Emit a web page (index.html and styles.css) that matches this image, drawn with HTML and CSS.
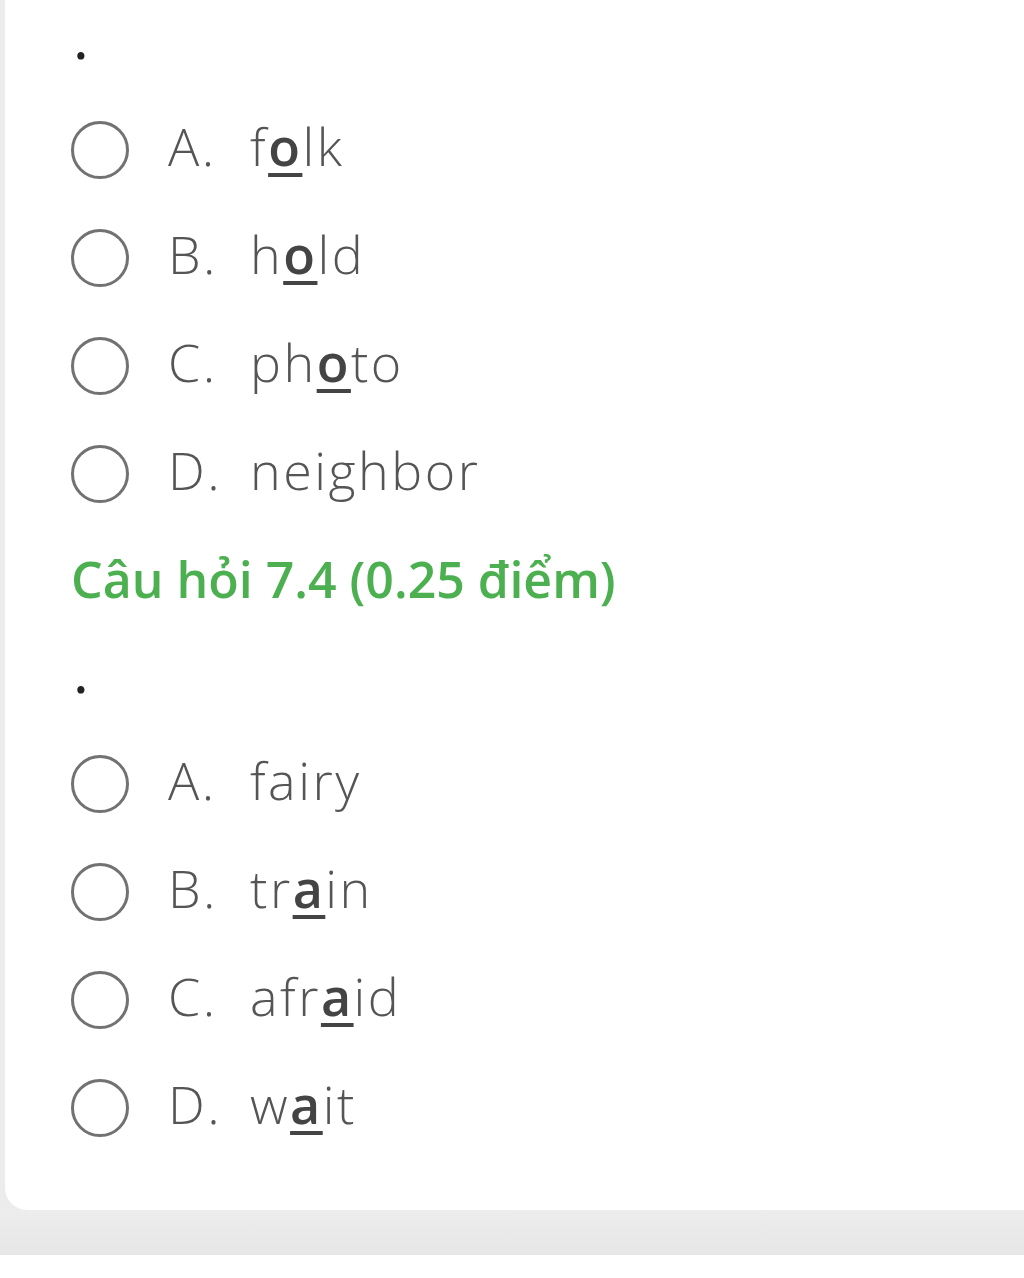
FILE: index.html
```html
<!DOCTYPE html>
<html lang="vi">
<head>
<meta charset="utf-8">
<title>Câu hỏi</title>
<link rel="stylesheet" href="styles.css">
</head>
<body>
<div class="page">
  <div class="card">
    <div class="dot">.</div>
    <div class="options">
      <div class="option"><span class="radio"></span><span class="label">A.</span><span class="word">f<b>o</b>lk</span></div>
      <div class="option"><span class="radio"></span><span class="label">B.</span><span class="word">h<b>o</b>ld</span></div>
      <div class="option"><span class="radio"></span><span class="label">C.</span><span class="word">ph<b>o</b>to</span></div>
      <div class="option"><span class="radio"></span><span class="label">D.</span><span class="word">neighbor</span></div>
    </div>
    <h2 class="question">Câu hỏi 7.4 (0.25 điểm)</h2>
    <div class="dot dot-second">.</div>
    <div class="options">
      <div class="option"><span class="radio"></span><span class="label">A.</span><span class="word">fairy</span></div>
      <div class="option"><span class="radio"></span><span class="label">B.</span><span class="word">tr<b>a</b>in</span></div>
      <div class="option"><span class="radio"></span><span class="label">C.</span><span class="word">afr<b>a</b>id</span></div>
      <div class="option"><span class="radio"></span><span class="label">D.</span><span class="word">w<b>a</b>it</span></div>
    </div>
  </div>
  <div class="band"></div>
</div>
</body>
</html>
```

FILE: styles.css
```css
html, body {
  margin: 0;
  padding: 0;
  background: #ffffff;
}

.page {
  font-family: "Open Sans", "Noto Sans", sans-serif;
  background: #ececec;
  padding-left: 5px;
}

.card {
  background: #ffffff;
  border-bottom-left-radius: 22px;
  padding: 14px 0 48px 66px;
}

.band {
  height: 45px;
  background: linear-gradient(#ededed, #e6e6e6);
  margin-left: -5px;
}

.dot {
  font-size: 50px;
  line-height: 52px;
  height: 52px;
  color: #222;
  font-weight: 600;
  padding-left: 3px;
}

.dot-second {
  margin-top: 44px;
}

.options {
  margin-top: 30px;
  display: flex;
  flex-direction: column;
}

.option {
  height: 108px;
  display: flex;
  align-items: center;
  font-size: 52px;
  line-height: 1;
  color: #555;
  font-weight: 300;
  letter-spacing: 2.5px;
}

.radio {
  width: 58px;
  height: 58px;
  box-sizing: border-box;
  border: 3px solid #727272;
  border-radius: 50%;
  flex: none;
  margin-right: 39px;
}

.label {
  width: 82px;
  flex: none;
  padding-bottom: 8px;
}

.word {
  padding-bottom: 8px;
}

.word b {
  font-weight: 600;
  color: #444;
  text-decoration: underline;
  text-decoration-thickness: 4px;
  text-underline-offset: 7px;
}

.question {
  margin: 26px 0 0 0;
  font-size: 50px;
  line-height: 50px;
  font-weight: 600;
  color: #4caf50;
}
```
